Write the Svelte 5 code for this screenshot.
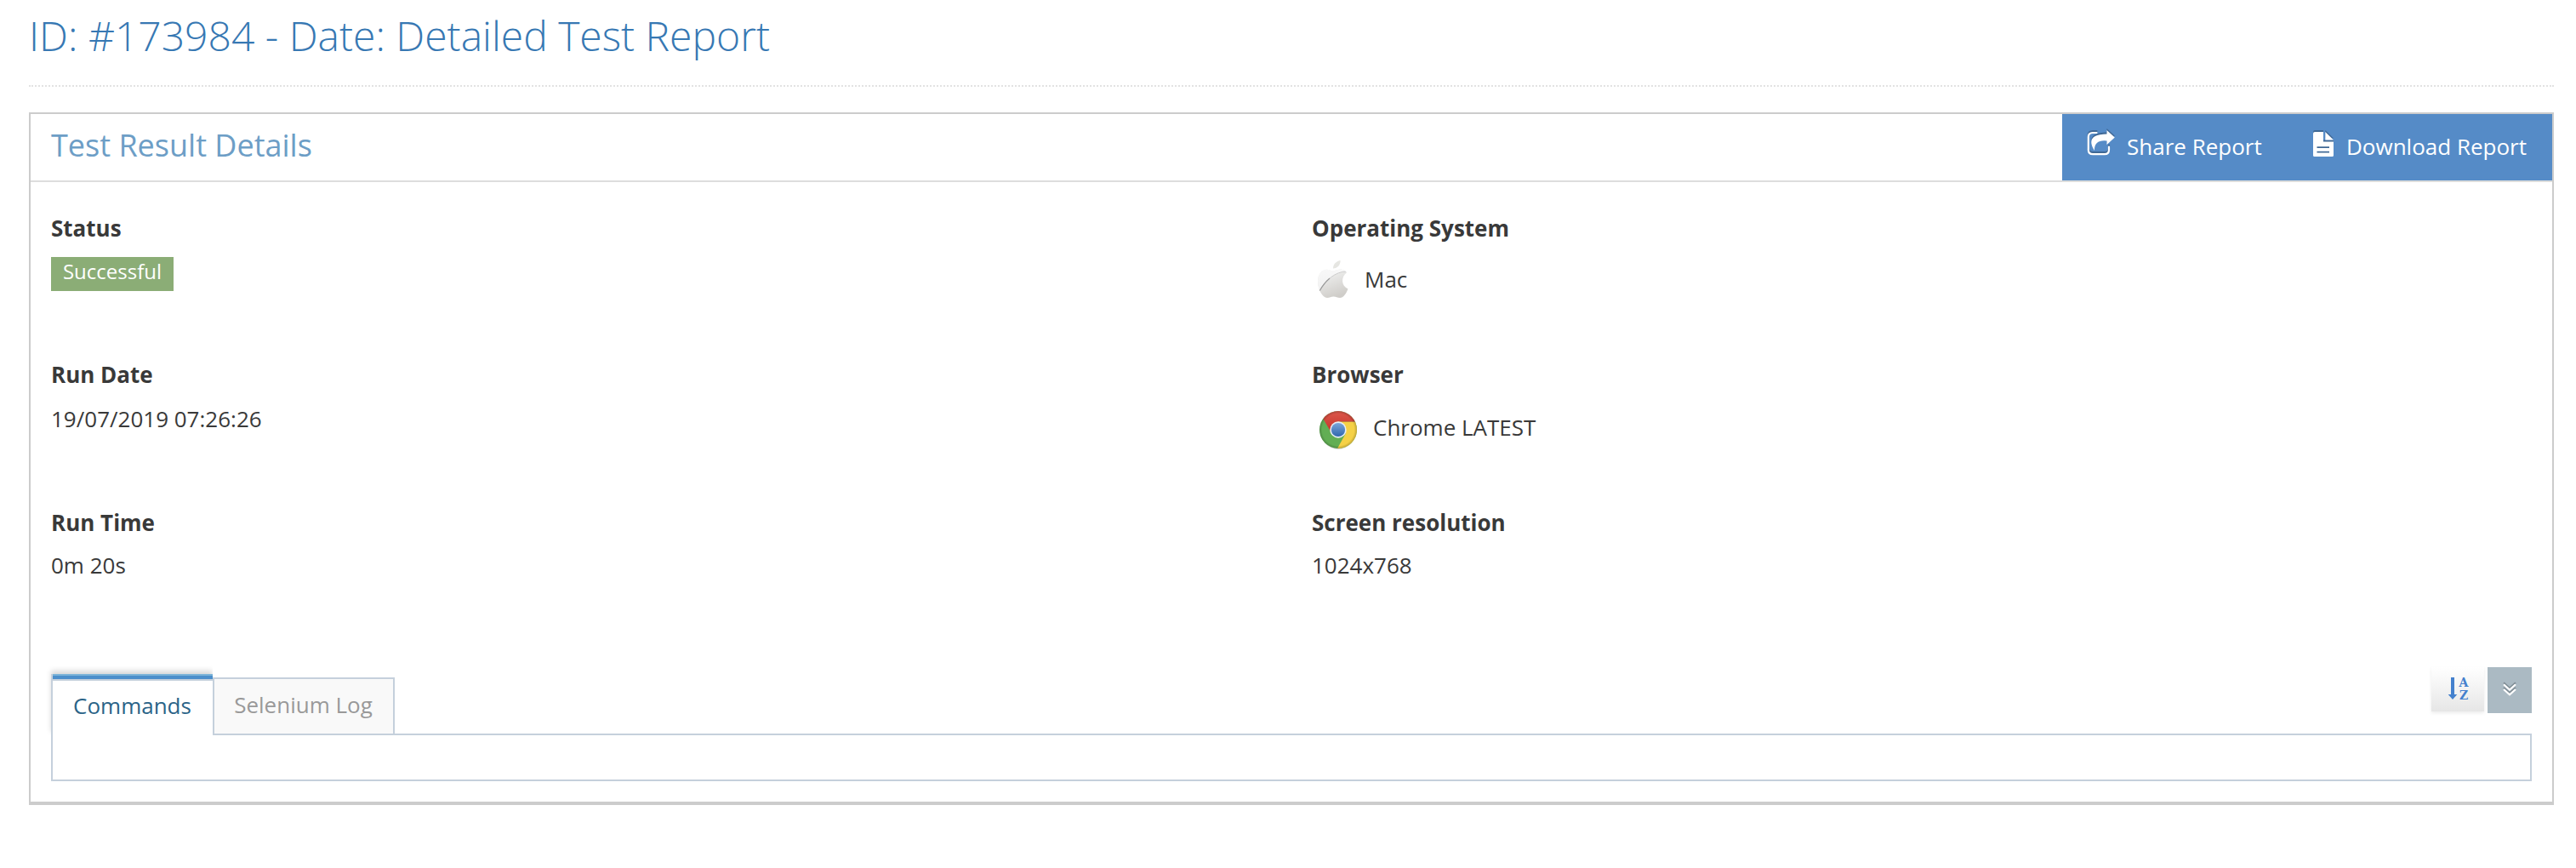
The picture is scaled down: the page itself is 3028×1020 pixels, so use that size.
<script>
  const left = [
    { label: 'Status', badge: 'Successful' },
    { label: 'Run Date', value: '19/07/2019 07:26:26' },
    { label: 'Run Time', value: '0m 20s' }
  ];
  const right = [
    { label: 'Operating System', icon: 'apple', value: 'Mac' },
    { label: 'Browser', icon: 'chrome', value: 'Chrome LATEST' },
    { label: 'Screen resolution', value: '1024x768' }
  ];
</script>

<main>
  <h1><span>ID: #173984 - Date: Detailed Test Report</span></h1>

  <section class="panel">
    <header>
      <h2><span>Test Result Details</span></h2>
      <div class="actions">
        <button class="share">
          <svg width="34" height="34" viewBox="0 0 34 34">
            <path d="M11.500 5H7Q1.800 5 1.800 10V25Q1.800 30.200 7 30.200H21Q26 30.200 26 25V21.500" fill="none" stroke="#fff" stroke-width="2.200" stroke-linecap="round" />
            <path d="M23.500 2L32.800 10.500L23.500 19V14.500Q8.500 13 9 26Q-3 7 23.500 6.500Z" fill="#fff" />
          </svg>
          <span>Share Report</span>
        </button>
        <button class="download">
          <svg width="26" height="31" viewBox="0 0 26 31">
            <path fill="#fff" fill-rule="evenodd" d="M3 1H13V12.500H25V28.500Q25 30 23.500 30H2.500Q1 30 1 28.500V3Q1 1 3 1ZM5.500 18.200V20H20V18.200ZM5.500 23.700V25.500H20V23.700Z" />
            <path fill="#fff" d="M15.300 1L25 10.500H15.300Z" />
          </svg>
          <span>Download Report</span>
        </button>
      </div>
    </header>

    <div class="details">
      {#each [left, right] as column}
        <dl>
          {#each column as item}
            <div class="item">
              <dt>{item.label}</dt>
              {#if item.badge}
                <dd class="status"><span class="badge">{item.badge}</span></dd>
              {:else}
                <dd class={item.icon ?? 'plain'}>
                  {#if item.icon === 'apple'}
                    <svg width="38" height="48" viewBox="0 0 38 48">
                      <defs>
                        <linearGradient id="silver" x1="0" y1="0" x2="0.3" y2="1">
                          <stop offset="0" stop-color="#fafafa" />
                          <stop offset="0.45" stop-color="#ebebea" />
                          <stop offset="1" stop-color="#cfcdc9" />
                        </linearGradient>
                        <linearGradient id="gloss" x1="0" y1="0" x2="0" y2="1">
                          <stop offset="0" stop-color="#fbfbfb" />
                          <stop offset="1" stop-color="#f1f1f1" />
                        </linearGradient>
                        <clipPath id="body">
                          <path d="M18.500 13.500C21.500 13.500 24 11.500 28 11.600C31.500 11.700 33.800 13.600 35 15.600C28 20.500 28.500 31 36.500 34.500C34.500 40 31 45 27 45C24 45 22.500 43.500 19.500 43.500C16.500 43.500 15 45 12 45C6.500 45 1 34.500 1 25.500C1 17 6 11.800 11.500 11.800C14.500 11.800 16.500 13.500 18.500 13.500Z" />
                        </clipPath>
                      </defs>
                      <path d="M19 10.500C19 5.500 22.500 2 27.500 1C28 6 24 10.500 19 10.500Z" fill="#e6e6e2" />
                      <g clip-path="url(#body)">
                        <rect width="38" height="48" fill="url(#silver)" />
                        <path d="M0 0H38V14C22 14 10 24 3 37L0 38Z" fill="url(#gloss)" />
                        <path d="M35 14C22 14 10 24 3 37" fill="none" stroke="#cbcbcb" stroke-width="1" />
                        <path d="M15 22Q8 28 3 37" fill="none" stroke="#9a9a9a" stroke-width="1.200" />
                      </g>
                    </svg>
                  {:else if item.icon === 'chrome'}
                    <svg width="46" height="48" viewBox="0 0 46 48">
                      <defs>
                        <linearGradient id="red" x1="0" y1="0" x2="0" y2="1">
                          <stop offset="0" stop-color="#dc5a4c" />
                          <stop offset="1" stop-color="#c8322b" />
                        </linearGradient>
                        <linearGradient id="blue" x1="0" y1="0" x2="0" y2="1">
                          <stop offset="0" stop-color="#7aa6da" />
                          <stop offset="1" stop-color="#2f66ae" />
                        </linearGradient>
                        <radialGradient id="rim">
                          <stop offset="0.850" stop-color="#000" stop-opacity="0" />
                          <stop offset="1" stop-color="#000" stop-opacity="0.220" />
                        </radialGradient>
                        <clipPath id="disc"><circle cx="23" cy="23" r="22" /></clipPath>
                      </defs>
                      <ellipse cx="23" cy="24.500" rx="20.500" ry="21.500" fill="#d2d2d2" />
                      <g clip-path="url(#disc)">
                        <rect width="46" height="46" fill="#62ae54" />
                        <path d="M23 13.500H46V46H21.500L32 27Z" fill="#f5d146" />
                        <path d="M0 0H46V13.500H23L14 25L5 9.500Z" fill="url(#red)" />
                        <circle cx="23" cy="23" r="22" fill="url(#rim)" />
                      </g>
                      <circle cx="23" cy="23" r="9.700" fill="#e9eef5" />
                      <circle cx="23" cy="23" r="8.100" fill="url(#blue)" />
                    </svg>
                  {/if}
                  <span>{item.value}</span>
                </dd>
              {/if}
            </div>
          {/each}
        </dl>
      {/each}
    </div>

    <div class="tabbar">
      <nav>
        <button class="tab active"><span>Commands</span></button>
        <button class="tab"><span>Selenium Log</span></button>
      </nav>
      <div class="tools">
        <button class="sort" aria-label="Sort">
          <svg width="32" height="38" viewBox="0 0 32 38" fill="#4480cd">
            <path d="M5 2H9V22H12.300L7 28L1.700 22H5Z" />
            <text x="20" y="13" text-anchor="middle">A</text>
            <text x="20" y="28" text-anchor="middle">Z</text>
          </svg>
        </button>
        <button class="expand" aria-label="Expand all">
          <svg width="16" height="20" viewBox="0 0 16 20" fill="none" stroke-width="2.200">
            <path d="M1 2.300L8 8.500L15 2.300M1 8L8 14.200L15 8" stroke="#7f8c94" />
            <path d="M1 4.300L8 10.500L15 4.300M1 10L8 16.200L15 10" stroke="#fff" />
          </svg>
        </button>
      </div>
    </div>
    <div class="content"></div>
  </section>
</main>

<style>
  :global(body) { background: #fff; }
  main {
    box-sizing: border-box;
    padding: 0 26px 0 34px;
    font: 26px/40px 'Open Sans', sans-serif;
    color: #393939;
  }
  h1, h2, dl, dd { margin: 0; font-weight: 400; }
  svg { display: block; flex: none; }
  button {
    box-sizing: border-box;
    border: 0;
    margin: 0;
    padding: 0;
    background: none;
    font: inherit;
    color: inherit;
    white-space: nowrap;
  }
  h1 {
    height: 100px;
    border-bottom: 2px dotted #e2e2e2;
    font-size: 48px;
    line-height: 84px;
    font-weight: 300;
    color: #3778b3;
  }
  .panel {
    box-sizing: border-box;
    margin-top: 30px;
    height: 814px;
    border: 2px solid #ccc;
    border-bottom-width: 4px;
  }
  header {
    display: flex;
    justify-content: space-between;
    height: 78px;
    border-bottom: 2px solid #ddd;
  }
  h2 {
    padding-left: 24px;
    font-size: 36px;
    line-height: 74px;
    color: #6d9ec6;
  }
  .actions {
    display: flex;
    box-sizing: border-box;
    width: 576px;
    padding-left: 29px;
    background: #558bc7;
    color: #fff;
    text-shadow: 0 -2px 0 rgba(0, 0, 0, 0.25);
  }
  .actions svg { filter: drop-shadow(0 -2px 0 rgba(0, 0, 0, 0.25)); }
  .actions button { display: flex; line-height: 76px; }
  .share { width: 265px; gap: 13px; }
  .share svg { margin-top: 17px; }
  .download { gap: 14px; }
  .download svg { margin-top: 20px; }
  .details {
    display: grid;
    grid-template-columns: 1482px 1fr;
    padding: 34px 24px 0;
    height: 536px;
  }
  .item { height: 172px; }
  .item:nth-child(2) { height: 174px; }
  dt { font-weight: 700; }
  .status { padding-top: 14px; }
  .badge {
    display: block;
    box-sizing: border-box;
    width: 144px;
    height: 40px;
    text-align: center;
    font-size: 24px;
    line-height: 33px;
    color: #fff;
    background: #8bad76;
  }
  .plain { padding-top: 12px; }
  .item:nth-child(3) .plain { padding-top: 10px; }
  .apple, .chrome { display: flex; align-items: flex-start; }
  .apple { padding: 17px 0 0 6px; gap: 18px; }
  .apple span { padding-top: 3px; }
  .chrome { padding: 22px 0 0 8px; gap: 18px; }
  .tabbar {
    display: flex;
    justify-content: space-between;
    height: 78px;
    padding: 0 24px;
  }
  nav { display: flex; align-items: flex-end; }
  .tab {
    height: 66px;
    width: 214px;
    padding: 0 1px 4px 0;
    border: 2px solid #c5d0dc;
    border-bottom: 0;
    background: #f9f9f9;
    color: #999;
    line-height: 60px;
  }
  .tab.active {
    position: relative;
    width: 190px;
    height: 72px;
    margin-bottom: -2px;
    padding: 3px 1px 0 0;
    border-width: 0 0 0 2px;
    background: linear-gradient(#7db4d8 0 2px, #4c8fcb 2px 6px, #c5d0dc 6px 8px, #fff 8px);
    background-origin: border-box;
    color: #2b6488;
    line-height: 69px;
    box-shadow: 0 -4px 6px rgba(0, 0, 0, 0.15);
    clip-path: inset(-12px 0 0 -8px);
  }
  .tools { display: flex; gap: 4px; }
  .tools button { display: flex; align-items: flex-start; }
  .sort {
    width: 62px;
    height: 52px;
    padding: 10px 0 0 18px;
    background: linear-gradient(#fff, #e6e6e6);
    box-shadow: 0 2px 4px rgba(0, 0, 0, 0.08);
  }
  .sort text { font: 700 14px/14px 'DejaVu Serif', serif; }
  .expand {
    width: 52px;
    height: 54px;
    padding: 16px 0 0 18px;
    background: #abbac3;
  }
  .content {
    box-sizing: border-box;
    height: 56px;
    margin: 0 24px;
    border: 2px solid #c5d0dc;
  }
</style>
